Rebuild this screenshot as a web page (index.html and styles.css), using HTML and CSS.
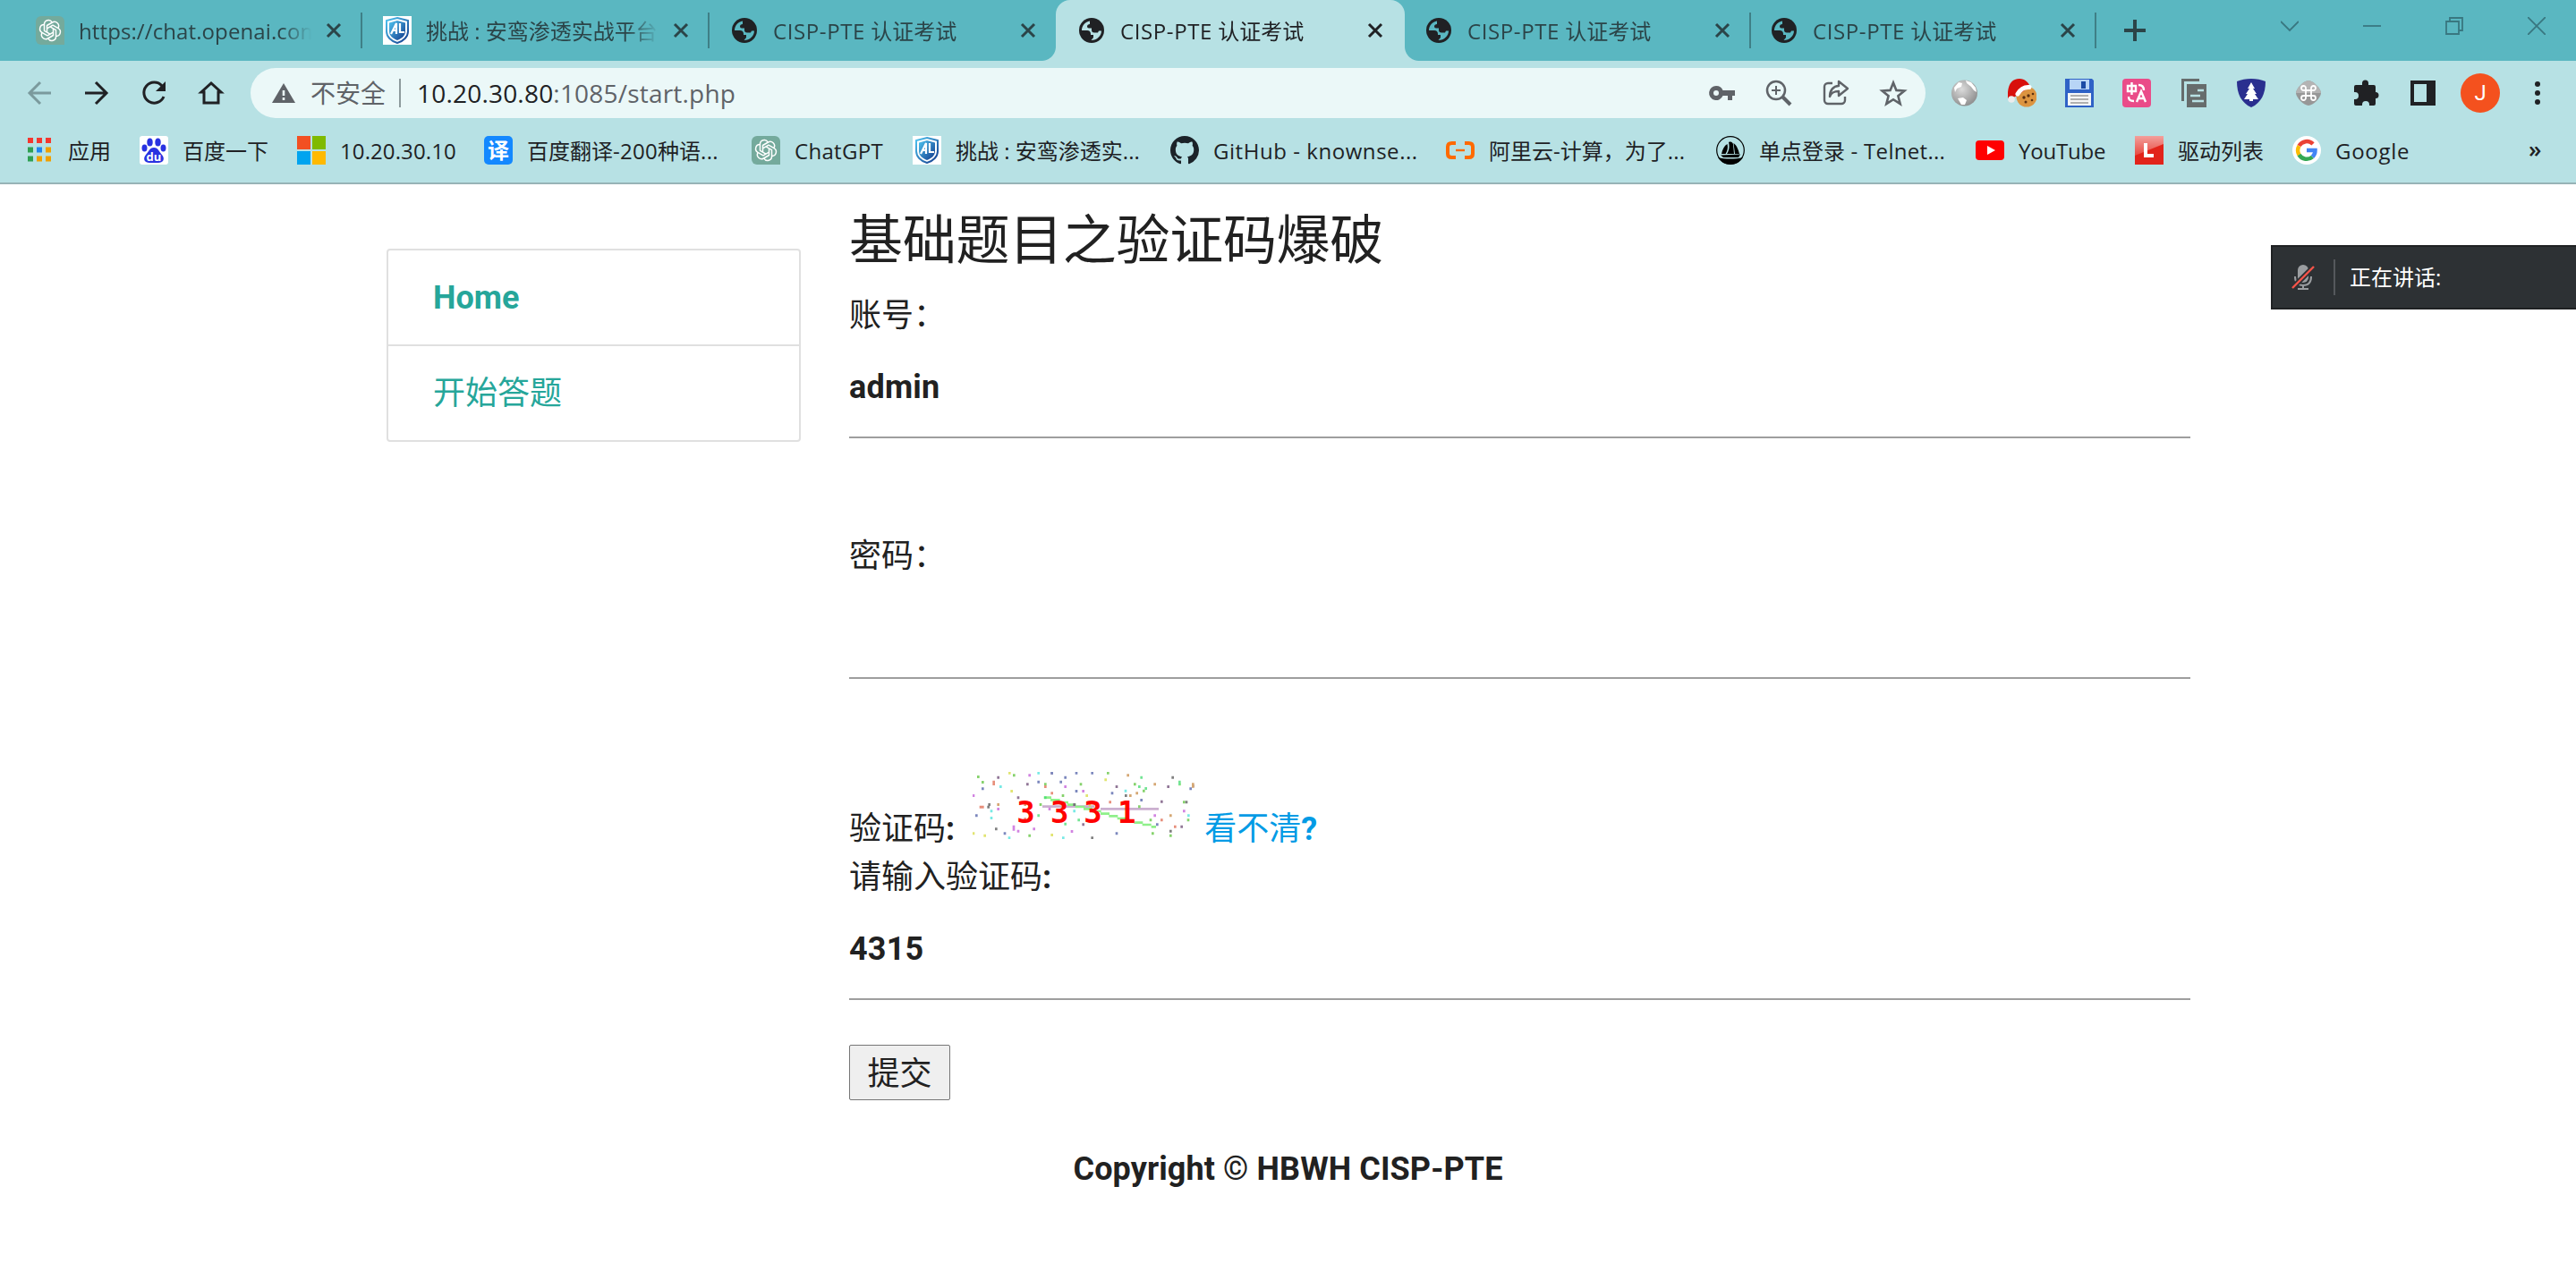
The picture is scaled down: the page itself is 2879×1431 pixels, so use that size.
FILE: index.html
```html
<!DOCTYPE html>
<html lang="zh-CN">
<head>
<meta charset="utf-8">
<title>CISP-PTE 认证考试</title>
<link rel="stylesheet" href="styles.css">
</head>
<body>
<svg class="defs" width="0" height="0" aria-hidden="true">
  <defs>
    <linearGradient id="gShield" x1="0" y1="0" x2="1" y2="1"><stop offset="0" stop-color="#4fc4f0"/><stop offset="1" stop-color="#123a8c"/></linearGradient>
    <radialGradient id="gBall" cx=".4" cy=".35" r=".7"><stop offset="0" stop-color="#dcdcdc"/><stop offset="1" stop-color="#8c8c8c"/></radialGradient>
    <linearGradient id="gRed" x1="0" y1="0" x2="0" y2="1"><stop offset="0" stop-color="#f3a09c"/><stop offset="1" stop-color="#e8483f"/></linearGradient>
  </defs>
  <symbol id="globe" viewBox="0 0 32 32"><circle cx="16" cy="16" r="14" fill="#202124"/><path d="M14 5.500C9 6.500 5 10.500 5 16h6c2.500 0 4 1.500 4 4v1h3v3l-2.500 3C22 27 27 22 27 16.500h-3l-1 2h-4c-2 0-3-1-3-3v-2h-3c-1.200 0-2-.8-2-2 0-1.600 1.400-2.500 3-2.500z" class="land"/></symbol>
  <symbol id="close" viewBox="0 0 18 18"><path d="M2 2l14 14M16 2L2 16" fill="none" stroke="currentColor" stroke-width="3"/></symbol>
  <symbol id="gpt" viewBox="0 0 32 32"><path d="M6 0h20a6 6 0 0 1 6 6v26H6a6 6 0 0 1-6-6V6a6 6 0 0 1 6-6z" fill="#74aa9c"/><g fill="none" stroke="#fff" stroke-width="1.500" stroke-linejoin="round"><path id="petal" d="M12.500 18v-7.500l6-3.500a4.700 4.700 0 0 1 6.500 6.300"/><use href="#petal" transform="rotate(60 16 16)"/><use href="#petal" transform="rotate(120 16 16)"/><use href="#petal" transform="rotate(180 16 16)"/><use href="#petal" transform="rotate(240 16 16)"/><use href="#petal" transform="rotate(300 16 16)"/></g></symbol>
  <symbol id="al" viewBox="0 0 32 32"><path fill="#fff" d="M0 0h32v32H0z"/><path d="M16 2l12 3v12c0 6-5 11-12 13C9 28 4 23 4 17V5z" fill="none" stroke="url(#gShield)" stroke-width="2"/><path d="M16 5l9 2.500V17c0 5-4 8-9 10-5-2-9-5-9-10V7.500z" fill="url(#gShield)"/><path d="M9 20l6-12v12m-4-4h4M19 8v10h5" fill="none" stroke="#fff" stroke-width="2.200"/></symbol>
</svg>

<header class="browser">
  <div class="tabstrip">
    <div class="tab"><svg class="fav"><use href="#gpt"/></svg><span class="title"><span class="en">https://chat.openai.com</span></span><svg class="x"><use href="#close"/></svg><i class="sep"></i></div>
    <div class="tab"><svg class="fav"><use href="#al"/></svg><span class="title">挑战 : 安鸾渗透实战平台</span><svg class="x"><use href="#close"/></svg><i class="sep"></i></div>
    <div class="tab"><svg class="fav"><use href="#globe"/></svg><span class="title"><span class="cisp">CISP-PTE</span> 认证考试</span><svg class="x"><use href="#close"/></svg></div>
    <div class="tab active"><svg class="fav"><use href="#globe"/></svg><span class="title"><span class="cisp">CISP-PTE</span> 认证考试</span><svg class="x"><use href="#close"/></svg></div>
    <div class="tab"><svg class="fav"><use href="#globe"/></svg><span class="title"><span class="cisp">CISP-PTE</span> 认证考试</span><svg class="x"><use href="#close"/></svg><i class="sep"></i></div>
    <div class="tab last"><svg class="fav"><use href="#globe"/></svg><span class="title"><span class="cisp">CISP-PTE</span> 认证考试</span><svg class="x"><use href="#close"/></svg><i class="sep"></i></div>
    <svg class="plus" viewBox="0 0 24 24"><path d="M12 0v24M0 12h24" stroke="#2b4448" stroke-width="4"/></svg>
    <div class="winctl">
      <svg viewBox="0 0 20 20"><path d="M0 5l10 10L20 5"/></svg>
      <svg viewBox="0 0 20 20"><path d="M0 10h20"/></svg>
      <svg viewBox="0 0 20 20"><path d="M1 5h14v14H1zM5 5V1h14v14h-4"/></svg>
      <svg viewBox="0 0 20 20"><path d="M0 0l20 20M20 0L0 20"/></svg>
    </div>
  </div>

  <div class="toolbar">
    <div class="nav">
      <svg viewBox="0 0 26 26" class="off"><path d="M26 13H2M14 1L2 13l12 12"/></svg>
      <svg viewBox="0 0 26 26"><path d="M0 13h24M12 1l12 12-12 12"/></svg>
      <svg viewBox="0 0 26 26"><path d="M22 5a11.500 11.500 0 1 0 2 12"/><path d="M26 0v11H15z" class="solid"/></svg>
      <svg viewBox="0 0 26 26"><path d="M5 24V12H2L13 2l11 10h-3v12z"/></svg>
    </div>
    <div class="omnibox">
      <svg class="warn" viewBox="0 0 26 22"><path d="M13 0l13 22H0z" fill="#5f6368"/><path d="M13 8v6M13 16v3" stroke="#ebf8f8" stroke-width="2.600"/></svg>
      <span class="insecure">不安全</span><i class="bar"></i>
      <span class="url">10.20.30.80<span class="path">:1085/start.php</span></span>
      <div class="actions">
        <svg viewBox="0 0 32 32"><path d="M10 8a8 8 0 1 0 7.500 11H23v5h5v-5h3v-6H17.500A8 8 0 0 0 10 8zm0 5a3 3 0 1 1 0 6 3 3 0 0 1 0-6z" fill="#5f6368"/></svg>
        <svg viewBox="0 0 32 32"><g fill="none" stroke="#5f6368"><circle cx="13" cy="13" r="10" stroke-width="2.500"/><path d="M20 20l9 9" stroke-width="4"/><path d="M13 8v10M8 13h10" stroke-width="2"/></g></svg>
        <svg viewBox="0 0 32 32"><g fill="none" stroke="#5f6368" stroke-width="2.400" stroke-linejoin="round"><path d="M12 5H7a4 4 0 0 0-4 4v15a4 4 0 0 0 4 4h15a4 4 0 0 0 4-4v-4"/><path d="M19 3l10 8-10 8v-5c-5 0-8 1-10 6 0-7 4-12 10-12z"/></g></svg>
        <svg viewBox="0 0 32 32"><path d="M16 4.500l3.400 8.400 9 .6-7 5.800 2.300 8.800L16 23.200l-7.700 4.900 2.300-8.800-7-5.800 9-.6z" fill="none" stroke="#5f6368" stroke-width="2.600"/></svg>
      </div>
    </div>
    <div class="exts">
      <svg viewBox="0 0 32 32"><circle cx="15.500" cy="16" r="14.500" fill="url(#gBall)"/><path d="M4 10l5-6 4 1-1 4-5 2-2 4zM17 2l6 2 5 6 1 5-3-2-3-4-5-4zM8 22l6-1 4 3-2 5-4 0z" fill="#fff"/></svg>
      <svg viewBox="0 0 32 32"><circle cx="21" cy="20" r="11.500" fill="#dc9440"/><g fill="#5b3011"><circle cx="18" cy="21" r="1.700"/><circle cx="23" cy="19" r="1.700"/><circle cx="27" cy="24" r="1.300"/><circle cx="20" cy="26" r="1.500"/><circle cx="28" cy="17" r="1.300"/></g><path d="M0 22C-1 7 4 0 13 0c6 0 10 4 12 9L10 19 6 21z" fill="#d8100c"/><path d="M11 17c3-5 7-8 13-7.500" fill="none" stroke="#fff" stroke-width="5" stroke-linecap="round"/><circle cx="4" cy="23" r="3.800" fill="#ececec"/></svg>
      <svg viewBox="0 0 32 32"><path d="M0 0h30l2 2v30H0z" fill="#2f62c6"/><path d="M5 1h22v11H5z" fill="#b7d5f6"/><path d="M18 3h5v8h-5z" fill="#1b4ba5"/><path d="M3 16h26v14H3z" fill="#f6f6f6"/><path d="M6 19h20M6 23h20M6 27h20" stroke="#999" stroke-width="1.600"/></svg>
      <svg viewBox="0 0 32 32"><rect width="32" height="32" rx="4" fill="#ea4c89"/><g fill="none" stroke="#fff" stroke-width="2.400"><path d="M6 8h9v6H6zM10.500 4v14M18 7c4 0 6 2 6 6M7 20c0 4 2 5 6 5M16 26l5-12 5 12M18 22h6"/></g></svg>
      <svg viewBox="0 0 32 32"><g fill="#666c6c"><path d="M2 0h20v3H5v22H2zM8 6h22v26H8z"/></g><path d="M20 13h7M12 19h11M14 25h13" stroke="#b9e1e4" stroke-width="2.400"/></svg>
      <svg viewBox="0 0 32 32"><path d="M16 0c6 0 11 1 16 3 0 14-5 24-16 29C5 27 0 17 0 3c5-2 10-3 16-3z" fill="#2a2f8f"/><path d="M16 4l4 7h-2l4 6h-2l4 6h-6v2h-4v-2H8l4-6h-2l4-6h-2z" fill="#fff"/></svg>
      <svg viewBox="0 0 32 32"><path d="M16 2c5 0 14 9 14 14S21 30 16 30 2 21 2 16 11 2 16 2z" fill="#979797"/><path d="M2 16h28C30 11 21 2 16 2S2 11 2 16z" fill="#b4b4b4"/><path d="M13 13h6v6h-6zM13 13h-2.500a2.500 2.500 0 1 1 2.500-2.500zM19 13v-2.500a2.500 2.500 0 1 1 2.500 2.500zM19 19h2.500a2.500 2.500 0 1 1-2.500 2.500zM13 19v2.500a2.500 2.500 0 1 1-2.500-2.500z" fill="none" stroke="#fff" stroke-width="1.800"/></svg>
      <svg viewBox="0 0 32 32"><path d="M5 7h7V5a3.500 3.500 0 0 1 7 0v2h6q2 0 2 2v6h0a3.500 3.500 0 0 1 0 7v6q0 2-2 2h-5v-1a4 4 0 0 0-8 0v1H5q-2 0-2-2v-5h1a4 4 0 0 0 0-8H3V9q0-2 2-2z" fill="#202124"/></svg>
      <svg viewBox="0 0 32 32"><path d="M2 2h28v28H2zM6 6v20h14V6z" fill="#202124" fill-rule="evenodd"/></svg>
    </div>
    <span class="avatar">J</span>
    <span class="dots"><i></i><i></i><i></i></span>
  </div>

  <nav class="bookmarks">
    <a class="b1"><svg viewBox="0 0 26 28"><path d="M0 0h6v6H0zM10 0h6v6h-6zM20 0h6v6h-6z" fill="#f4372f"/><path d="M0 10.500h6v6H0zM0 20.500h6v6H0z" fill="#2fa052"/><path d="M10 10.500h6v6h-6z" fill="#1e86f0"/><path d="M20 10.500h6v6h-6zM10 20.500h6v6h-6zM20 20.500h6v6h-6z" fill="#f0a000"/></svg><span>应用</span></a>
    <a class="b2"><svg viewBox="0 0 32 32"><rect width="32" height="32" rx="3" fill="#fff"/><g fill="#2932e1"><ellipse cx="11.500" cy="7" rx="3.200" ry="4.500"/><ellipse cx="20.500" cy="7" rx="3.200" ry="4.500"/><ellipse cx="5.500" cy="13.500" rx="3" ry="4"/><ellipse cx="26.500" cy="13.500" rx="3" ry="4"/><path d="M16 13c5 0 6 5 9 8 4 5 1 9-4 9H11c-5 0-8-4-4-9 3-3 4-8 9-8z"/></g><text x="16" y="28" text-anchor="middle" class="du">du</text></svg><span>百度一下</span></a>
    <a class="b3"><svg viewBox="0 0 32 32"><path d="M0 0h15v15H0z" fill="#f25022"/><path d="M17 0h15v15H17z" fill="#7fba00"/><path d="M0 17h15v15H0z" fill="#00a4ef"/><path d="M17 17h15v15H17z" fill="#ffb900"/></svg><span class="en">10.20.30.10</span></a>
    <a class="b4"><svg viewBox="0 0 32 32"><rect width="32" height="32" rx="5" fill="#1388ff"/><text x="16" y="24.500" text-anchor="middle" class="yi">译</text></svg><span>百度翻译<span class="en">-200</span>种语<span class="en">...</span></span></a>
    <a class="b5"><svg viewBox="0 0 32 32"><use href="#gpt"/></svg><span class="en">ChatGPT</span></a>
    <a class="b6"><svg viewBox="0 0 32 32"><use href="#al"/></svg><span>挑战 : 安鸾渗透实<span class="en">...</span></span></a>
    <a class="b7"><svg viewBox="0 0 16 16"><path fill="#1b2228" d="M8 0C3.580 0 0 3.580 0 8c0 3.540 2.290 6.530 5.470 7.590.4.070.55-.17.55-.38 0-.19-.01-.82-.01-1.490-2.010.37-2.530-.49-2.690-.94-.09-.23-.48-.94-.82-1.130-.28-.15-.68-.52-.01-.53.63-.01 1.080.58 1.230.82.72 1.210 1.870.87 2.330.66.070-.52.28-.87.51-1.070-1.780-.2-3.640-.89-3.640-3.950 0-.87.31-1.590.82-2.150-.08-.2-.36-1.020.08-2.120 0 0 .67-.21 2.200.82.64-.18 1.320-.27 2-.27s1.360.09 2 .27c1.530-1.040 2.200-.82 2.200-.82.44 1.100.16 1.920.08 2.120.51.56.82 1.270.82 2.150 0 3.070-1.870 3.750-3.650 3.950.29.25.54.73.54 1.480 0 1.070-.01 1.930-.01 2.200 0 .21.15.46.55.38A8.010 8.010 0 0 0 16 8c0-4.420-3.580-8-8-8z"/></svg><span class="en">GitHub - knownse...</span></a>
    <a class="b8"><svg viewBox="0 0 32 32"><path d="M11 8H6.500Q2 8 2 12v8q0 4 4.500 4H11M21 8h4.500Q30 8 30 12v8q0 4-4.500 4H21" fill="none" stroke="#ff6a00" stroke-width="4"/><path d="M11 16h10" stroke="#ff6a00" stroke-width="2.400"/></svg><span>阿里云<span class="en">-</span>计算，为了<span class="en">...</span></span></a>
    <a class="b9"><svg viewBox="0 0 32 32"><circle cx="16" cy="16" r="15.300" fill="none" stroke="#000" stroke-width="1.200"/><path d="M2 24c8 2 19 2 28 0-3 5-8 8-14 8S5 29 2 24zM14 7c3-1 4 0 5 2l1 11h-8c3-4 3-9 2-13zM12.500 9c1 4 0 8-2 11H6c1-5 3-9 6.500-11zM19.500 8c4 3 5.500 8 6.500 12h-5zM5 21.500l22-1-2 3.500H8z"/></svg><span>单点登录<span class="en"> - Telnet...</span></span></a>
    <a class="b10"><svg viewBox="0 0 32 32"><rect y="5" width="32" height="22" rx="4" fill="#f00"/><path d="M13 11l9 5-9 5z" fill="#fff"/></svg><span class="en">YouTube</span></a>
    <a class="b11"><svg viewBox="0 0 32 32"><path d="M0 0h32v32H0z" fill="#e2231a"/><path d="M0 0h32v9L0 22z" fill="url(#gRed)"/><path d="M12 8v14h9" fill="none" stroke="#fff" stroke-width="4"/></svg><span>驱动列表</span></a>
    <a class="b12"><svg viewBox="0 0 32 32"><circle cx="16" cy="16" r="16" fill="#fff"/><g fill="none" stroke-width="4.500"><path d="M23 9A9.800 9.800 0 0 0 7.500 11" stroke="#ea4335"/><path d="M7.500 11a10 10 0 0 0 0 10" stroke="#fbbc05"/><path d="M7.500 21A9.800 9.800 0 0 0 22.500 23.300" stroke="#34a853"/><path d="M22.500 23.300A10 10 0 0 0 25.500 16H16" stroke="#4285f4"/></g></svg><span class="en">Google</span></a>
    <span class="more">»</span>
  </nav>
</header>

<main class="page">
  <aside class="menu"><a class="home">Home</a><a>开始答题</a></aside>
  <form class="form">
    <h5>基础题目之验证码爆破</h5>
    <label>账号：</label>
    <div class="input">admin</div>
    <label class="gap">密码：</label>
    <div class="input"></div>
    <div class="captcha">
      <span>验证码<b>:</b></span>
      <svg viewBox="51 39 750 225" class="code">
        <g fill="none" stroke-width="8">
          <path d="M285 155h175M480 163h195" stroke="#cbb0d0"/>
          <path d="M290 125h25M312 133h32M340 141h32M368 149h30M395 156h32M423 163h30M452 171h30M480 179h30M508 187h30M536 195h30M564 203h30M592 209h30M620 216h30M650 223h16" stroke="#8ff08a"/>
        </g>
        <g fill="none" stroke-width="8" stroke-linecap="square" opacity=".75">
          <path d="M137 57v1M317 42v1M235 80v1M392 148v1M534 88v1M707 88v1M752 222v1M790 86v1M204 125v1M422 215v1M685 138v1" stroke="#6d4a75"/>
          <path d="M85 73v1M70 55v1M190 50v1M354 118v1M505 42v1M595 80v1M625 102v1M122 278v1M774 200v1M715 252v1M242 252v1M295 80v1M610 155v1M655 245v1M648 200v1M279 148v1M760 140v1M414 80v1" stroke="#5ec43c"/>
          <path d="M122 72v8M295 88v1M317 110v1M512 140v1M685 200v1M730 222v1M85 156v1M78 156v1M227 197v1" stroke="#e06a50"/>
          <path d="M175 42v1M182 103v1M497 65v1M54 245v1M122 280v1M92 252v1M434 118v1M444 150v1M317 250v1M745 80v1" stroke="#d8dc42"/>
          <path d="M145 88v1M272 42v1M174 260v1M114 170v1M114 193v1M564 102v1M355 260v1M392 170v1M775 185v1" stroke="#4be3dd"/>
          <path d="M399 42v1M85 95v1M347 72v1M362 57v1M399 103v1M317 42v1M452 42v1M519 110v1M617 133v1M782 95v1M670 215v1M272 72v1M159 245v1M64 185v1M534 245v1" stroke="#5060a8"/>
          <path d="M242 50v1M54 118v1M189 222v10M204 237v1M384 238v1M362 88v1M760 170v1M662 185v1M137 163v1M257 230v1M422 103v1M309 163v1" stroke="#c35bd8"/>
          <path d="M572 50v1M602 110v1M662 80v1M580 118v1M137 148v1M715 185v1M227 148v1M790 80v8" stroke="#c88a45"/>
          <path d="M617 57v1M295 125v1M272 185v1M362 213v1M745 72v8M610 88v1M632 94v1M407 200v1" stroke="#43dc70"/>
          <path d="M107 148v1M130 230v1M452 260v1M565 118v1M722 57v1M768 140v1M104 156v1M715 237v1" stroke="#555"/>
        </g>
        <text y="210" class="digits"><tspan x="199">3</tspan><tspan x="312">3</tspan><tspan x="424">3</tspan><tspan x="537">1</tspan></text>
      </svg>
      <a>看不清<b>?</b></a>
    </div>
    <label>请输入验证码<b>:</b></label>
    <div class="input">4315</div>
    <button type="button">提交</button>
  </form>
</main>
<footer class="copy">Copyright © HBWH CISP-PTE</footer>

<div class="speaking">
  <svg viewBox="0 0 26 30"><rect x="7" y="1" width="12" height="20" rx="6" fill="#9a9da0"/><path d="M4 14c0 7 3 10 9 10s9-3 9-10M13 24v4M7 28h12" fill="none" stroke="#9a9da0" stroke-width="2"/><path d="M1 27L25 3" stroke="#2d3134" stroke-width="6"/><path d="M1 27L25 3" stroke="#f5544a" stroke-width="2.400"/></svg>
  <i></i><span>正在讲话:</span>
</div>
</body>
</html>
```
FILE: styles.css
```css
* { box-sizing: border-box; }
body {
  margin: 0;
  width: 2879px;
  height: 1431px;
  overflow: hidden;
  position: relative;
  background: #fff;
  color: #202124;
  font-family: "Open Sans", "Noto Sans CJK SC", sans-serif;
}
svg { display: block; flex: none; }
i { flex: none; }
.defs { position: absolute; }
.en { letter-spacing: 0.1px; }
.cisp { letter-spacing: 0.6px; }

/* browser chrome */
.browser { height: 206px; background: #b7e1e4; border-bottom: 2px solid #97b3b6; }
.tabstrip { display: flex; height: 68px; background: #5ab7c1; padding-left: 18px; }
.tab { --tab: #5ab7c1; position: relative; display: flex; align-items: center; width: 388px; padding: 2px 0 2px 22px; color: #2b4448; }
.tab.last { width: 386px; padding-left: 20px; }
.land { fill: var(--tab); }
.fav { width: 32px; height: 32px; }
.title {
  width: 260px; margin-left: 16px; height: 36px; padding-top: 2px; line-height: 34px; font-size: 24px;
  white-space: nowrap; overflow: hidden;
  -webkit-mask-image: linear-gradient(90deg, #000 226px, transparent 260px);
  mask-image: linear-gradient(90deg, #000 226px, transparent 260px);
}
.x { width: 18px; height: 18px; margin-left: 16px; }
.sep { width: 2px; height: 40px; margin-left: 21px; background: #3f7f87; }
.tab.active { --tab: #b7e1e4; width: 390px; margin-left: -2px; padding-left: 24px; background: #b7e1e4; border-radius: 16px 16px 0 0; color: #202124; }
.tab.active::before, .tab.active::after { content: ""; position: absolute; bottom: 0; width: 16px; height: 16px; }
.tab.active::before { left: -16px; background: radial-gradient(circle at 0 0, #5ab7c1 15.5px, #b7e1e4 16.5px); }
.tab.active::after { right: -16px; background: radial-gradient(circle at 100% 0, #5ab7c1 15.5px, #b7e1e4 16.5px); }
.plus { width: 24px; height: 24px; margin: 22px 0 0 30px; }
.winctl { display: flex; gap: 72px; margin: 19px 0 0 151px; }
.winctl svg { width: 20px; height: 20px; fill: none; stroke: #397780; stroke-width: 1.8; }

.toolbar { display: flex; align-items: center; height: 72px; }
.nav { display: flex; gap: 38px; padding-left: 31px; width: 280px; }
.nav svg { width: 26px; height: 26px; fill: none; stroke: #202124; stroke-width: 3; overflow: visible; }
.nav .off { stroke: #7b9a9d; }
.nav .solid { fill: #202124; stroke: none; }
.omnibox { display: flex; align-items: center; width: 1872px; height: 56px; border-radius: 28px; background: #ebf8f8; padding-left: 24px; font-size: 28px; line-height: 40px; }
.warn { width: 26px; height: 22px; }
.insecure { margin-left: 17px; width: 85px; color: #5f6368; white-space: nowrap; }
.bar { width: 2px; height: 32px; margin: 0 18px 0 14px; background: #8d9a9c; }
.url { letter-spacing: 0.2px; white-space: nowrap; }
.path { color: #5f6368; }
.actions { display: flex; gap: 32px; margin-left: auto; padding-right: 20px; }
.actions svg, .exts svg { width: 32px; height: 32px; }
.exts { display: flex; gap: 32px; margin-left: 28px; }
.avatar { width: 44px; height: 44px; margin-left: 26px; border-radius: 50%; background: #f4511e; color: #fff; font: 24px/44px Roboto, sans-serif; text-align: center; }
.dots { display: flex; flex-direction: column; gap: 4px; margin-left: 39px; }
.dots i { width: 6px; height: 6px; border-radius: 50%; background: #202124; }

.bookmarks { display: flex; align-items: center; height: 56px; padding-left: 31px; font-size: 24px; line-height: 34px; }
.bookmarks a { display: flex; align-items: center; gap: 16px; flex: none; white-space: nowrap; }
.bookmarks a > span { padding-top: 2px; }
.bookmarks svg { width: 32px; height: 32px; }
.bookmarks .b1 svg { width: 26px; height: 28px; }
.bookmarks .b1 { width: 125px; gap: 19px; }
.bookmarks .b2 { width: 176px; }
.bookmarks .b3 { width: 209px; }
.bookmarks .b4 { width: 299px; }
.bookmarks .b5 { width: 180px; }
.bookmarks .b6 { width: 288px; }
.bookmarks .b7 { width: 308px; }
.bookmarks .b8 { width: 302px; }
.bookmarks .b9 { width: 290px; }
.bookmarks .b10 { width: 178px; }
.bookmarks .b11 { width: 176px; }
.bookmarks .b12 { width: 264px; }
.b5 .en, .b4 .en, .b9 .en { letter-spacing: 0.3px; }
.b7 .en { letter-spacing: 0.55px; }
.b12 .en { letter-spacing: 0.7px; }
.b10 .en { letter-spacing: -0.2px; }
.more { margin-top: -4px; font-size: 26px; font-weight: 600; }
.du { font: bold 13px "Open Sans", sans-serif; fill: #fff; }
.yi { font: bold 24px "Noto Sans CJK SC", sans-serif; fill: #fff; }

/* page */
.page { display: flex; padding-left: 432px; color: #212121; font: 36px/54px Roboto, "Noto Sans CJK SC", sans-serif; }
.menu { width: 463px; height: 216px; margin-top: 72px; border: 2px solid #e0e0e0; border-radius: 4px; color: #26a69a; }
.menu a { display: block; height: 106px; padding-left: 50px; line-height: 107px; }
.menu .home { height: 107px; border-bottom: 2px solid #e0e0e0; font-weight: 700; }
.form { width: 1499px; margin-left: 54px; display: flex; flex-direction: column; align-items: stretch; }
.form h5 { margin: 31px 0 21px; font-size: 60px; line-height: 66px; font-weight: 400; letter-spacing: -0.3px; }
.form label { height: 54px; padding-top: 2px; white-space: nowrap; }
.form .gap { margin-top: 103px; }
.input { height: 112px; line-height: 111px; border-bottom: 2px solid #9e9e9e; font-weight: 700; letter-spacing: 0.2px; }
.captcha { display: flex; align-items: flex-end; height: 89px; margin-top: 104px; }
.captcha > span, .captcha a { height: 52px; white-space: nowrap; }
.code { width: 250px; height: 75px; margin: 0 9px 14px 20px; }
.captcha a { color: #039be5; }
.digits { font: bold 102px "DejaVu Sans Mono", monospace; fill: #f00; }
.form button { width: 113px; height: 62px; margin-top: 50px; padding: 4px 0 0; border: 1px solid #767676; border-radius: 2px; background: #efefef; color: #212121; font: 36px/54px Roboto, "Noto Sans CJK SC", sans-serif; }
.copy { margin-top: 50px; text-align: center; color: #212121; font: bold 36px/54px Roboto, sans-serif; letter-spacing: 0.1px; }

.speaking { position: absolute; left: 2538px; top: 274px; width: 341px; height: 72px; display: flex; align-items: center; padding-left: 21px; background: #2d3134; border: 2px solid #1f2123; border-right: 0; color: #fff; font-size: 24px; line-height: 34px; }
.speaking svg { width: 26px; height: 30px; }
.speaking i { width: 2px; height: 40px; margin: 0 16px 0 21px; background: #55585c; }
```
